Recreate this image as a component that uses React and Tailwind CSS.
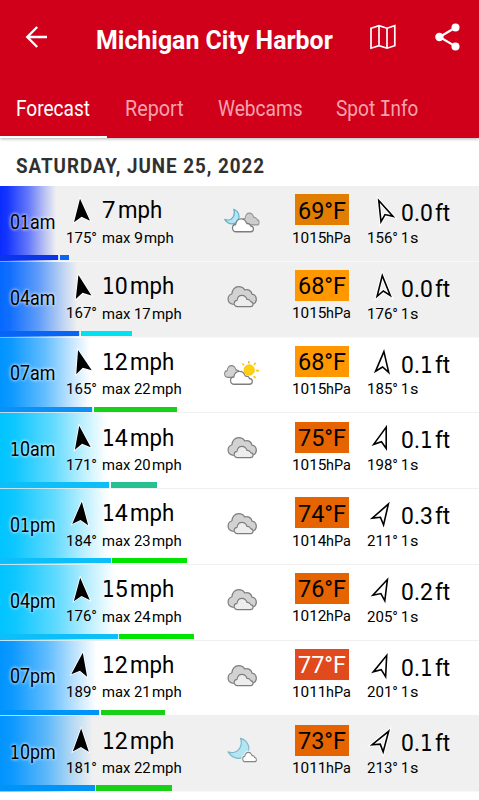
import { useLayoutEffect, useRef, useState } from 'react';

const WIND = 'M12 0.6 L20 23.6 L12 18.9 L4 23.6 Z';
const WAVE = 'M12 1.6 L18.6 21.9 L12 17 L5.4 21.9 Z';

// Sets a line of text to an exact advance width by scaling it horizontally.
function Fit({ w, className = '', children }) {
  const ref = useRef(null);
  const [scale, setScale] = useState(1);
  useLayoutEffect(() => {
    const apply = () => setScale(w / ref.current.offsetWidth);
    apply();
    document.fonts?.ready.then(apply);
  }, [w, children]);
  return (
    <div className={`whitespace-nowrap leading-none ${className}`} style={{ width: w }}>
      <span ref={ref} className="inline-block origin-left align-top" style={{ transform: `scaleX(${scale})` }}>
        {children}
      </span>
    </div>
  );
}

// Gives the figure one its foot serif.
function Slab({ text }) {
  return text.split(/(1)/).map((part, i) =>
    part === '1' ? (
      <span key={i} className="font-['DejaVu_Sans_Condensed','DejaVu_Sans',sans-serif] text-[0.97em] leading-[0]">1</span>
    ) : (
      part
    ),
  );
}

function WindArrow({ deg }) {
  return (
    <svg className="block h-6 w-6 overflow-visible" viewBox="0 0 24 24" style={{ transform: `rotate(${deg - 180}deg)` }}>
      <path d={WIND} fill="#000" stroke="#fff" strokeWidth="1.6" paintOrder="stroke" />
    </svg>
  );
}

function WaveArrow({ deg }) {
  return (
    <svg className="block h-6 w-6 overflow-visible" viewBox="0 0 24 24" style={{ transform: `rotate(${deg - 180}deg)` }}>
      <path d={WAVE} fill="none" stroke="#fff" strokeWidth="3.6" />
      <path d={WAVE} fill="none" stroke="#000" strokeWidth="1.6" strokeLinejoin="miter" />
    </svg>
  );
}

const SMALL_CLOUD = 'M4.5 12 C2.2 12 .8 10.7 .8 8.8 C.8 7 2.2 5.7 4 5.7 C4.6 2.6 6.8 .8 9.6 .8 C12.4 .8 14.4 2.3 15.3 4.9 C17.6 4.7 19 5.6 19.5 7 C21.1 7.2 22.2 8.2 22.2 9.6 C22.2 11.1 21 12 19.3 12 Z';

function Weather({ kind }) {
  return (
    <svg className="block h-10 w-[50px]" viewBox="0 0 50 40" strokeWidth="1.2" strokeLinejoin="round">
      {kind === 'cloudy' && (
        <>
          <path d="M14.5 28.2 C11.6 27.6 10.1 25.6 10.1 23.1 C10.1 20.3 11.5 18.6 13.8 18 C14 14.2 16.6 10.6 20.8 10.6 C23.5 10.6 25.7 12 26.7 14 C30.2 12.8 33.5 14.8 34 18.2 C36.8 18.6 38.3 20.8 38.3 23.2 C38.3 25.8 36.6 27.7 34 28.4 Z" fill="#d2d2d2" stroke="#7d7d7d" />
          <path transform="translate(15.5 18.6) scale(.88 1)" d={SMALL_CLOUD} fill="#ededed" stroke="#7d7d7d" />
        </>
      )}
      {kind === 'moonCloud' && (
        <>
          <path d="M15.8 9.2 C20.5 11.2 22.4 16 20.2 20 C17.6 25 10.6 25.6 6.7 19.4 C11 20.8 14 19.2 15.3 16.8 C16.5 14.6 16.8 12.2 15.8 9.2 Z" fill="#b4e5f3" stroke="#66b2cb" />
          <path transform="translate(24 12.3) scale(.77 1.05)" d={SMALL_CLOUD} fill="#cccccc" stroke="#949494" />
          <path d={SMALL_CLOUD} transform="translate(13.7 17.9) scale(.98 1.16)" fill="#fff" stroke="#7d7d7d" />
        </>
      )}
      {kind === 'sunCloud' && (
        <>
          <g stroke="#f8c408" strokeWidth="1.6">
            <circle cx="31.2" cy="18" r="5.2" fill="#ffcf10" stroke="#f2bb00" strokeWidth=".7" />
            <path d="M30.8 9v2.4M24.5 11.5l1.5 1.8M37.6 10.8l-1.8 1.9M38.1 18.6h2.9M35.7 24.2l1.9 1.8" />
          </g>
          <path transform="translate(6 12.7) scale(.78 1.05)" d={SMALL_CLOUD} fill="#d2d2d2" stroke="#858585" />
          <path d={SMALL_CLOUD} transform="translate(11.7 18.5) scale(1.02 1.15)" fill="#fff" stroke="#7d7d7d" />
        </>
      )}
      {kind === 'moon' && (
        <>
          <path d="M22.4 8.3 C29 9.8 32.5 16.5 30 22.3 C26.8 29.6 15.8 31.2 10 21.9 C15 23.6 20 21.8 22 17.8 C23.6 14.8 23.8 11.6 22.4 8.3 Z" fill="#b4e5f3" stroke="#7fb9c9" />
          <path d={SMALL_CLOUD} transform="translate(24.2 21.6) scale(.64 .84)" fill="#fff" stroke="#f0f0f0" strokeWidth="4.5" />
          <path d={SMALL_CLOUD} transform="translate(24.2 21.6) scale(.64 .84)" fill="#fff" stroke="#858585" strokeWidth="1.5" />
        </>
      )}
    </svg>
  );
}

const BLUE = '#0094ff';
const CYAN = '#00c4ff';
const ROWS = [
  { t: '01am', s: '7', m: '9', d: 175, icon: 'moonCloud', f: 69, fc: '#e17d00', p: 1015, wd: 156, h: '0.0', c: '#0a2cff', c1: '#0a35e8', c2: '#0b66f2', b: [59.3, 60, 69], night: true },
  { t: '04am', s: '10', m: '17', d: 167, icon: 'cloudy', f: 68, fc: '#ff9800', p: 1015, wd: 176, h: '0.0', c: '#0568ff', c1: '#0764f5', c2: '#00e1f2', b: [80.3, 81, 132], night: true },
  { t: '07am', s: '12', m: '22', d: 165, icon: 'sunCloud', f: 68, fc: '#ff9800', p: 1015, wd: 185, h: '0.1', c: BLUE, c1: '#0a91f8', c2: '#19d019', b: [93, 94, 176.5] },
  { t: '10am', s: '14', m: '20', d: 171, icon: 'cloudy', f: 75, fc: '#e66400', p: 1015, wd: 198, h: '0.1', c: CYAN, c1: '#0cbff8', c2: '#27c093', b: [110, 110.6, 157] },
  { t: '01pm', s: '14', m: '23', d: 184, icon: 'cloudy', f: 74, fc: '#e66400', p: 1014, wd: 211, h: '0.3', c: CYAN, c1: '#0cbff8', c2: '#00e500', b: [112, 112.3, 187] },
  { t: '04pm', s: '15', m: '24', d: 176, icon: 'cloudy', f: 76, fc: '#e66400', p: 1012, wd: 205, h: '0.2', c: CYAN, c1: '#0cbff8', c2: '#00e500', b: [118.5, 119, 193.5] },
  { t: '07pm', s: '12', m: '21', d: 189, icon: 'cloudy', f: 77, fc: '#e04a1c', p: 1011, wd: 201, h: '0.1', c: BLUE, c1: '#0094f8', c2: '#19d019', b: [100, 101, 165] },
  { t: '10pm', s: '12', m: '22', d: 181, icon: 'moon', f: 73, fc: '#e66400', p: 1011, wd: 213, h: '0.1', c: BLUE, c1: '#0094f8', c2: '#19d019', b: [96, 96.3, 172.5], night: true },
];

function Row({ r }) {
  const [a, b, c] = r.b;
  const fade = a - 3;
  return (
    <div
      className={`flex h-[75.75px] flex-col ${r.night ? 'bg-[#f0f0f0]' : 'bg-white'}`}
      style={{
        backgroundImage: `linear-gradient(to right, ${r.c} 0px, ${r.c}f2 ${fade * 0.13}px, ${r.c}9c ${fade * 0.5}px, ${r.c}40 ${fade * 0.78}px, ${r.c}00 ${fade}px)`,
      }}
    >
      <div className="flex h-[69px]">
        <div className="w-[66px] pl-[10.3px] pt-[25.6px]">
          <Fit w={45.5} className="text-[20px] [text-shadow:0_0_4px_rgba(255,255,255,0.9),0_0_3px_rgba(255,255,255,0.5)]"><Slab text={r.t} /></Fit>
        </div>
        <div className="w-9 pt-[11.8px]">
          <div className="pl-[2.6px]"><WindArrow deg={r.d} /></div>
          <Fit w={30.5} className="mt-[8.6px] text-[14.3px]">{r.d}°</Fit>
        </div>
        <div className="w-[116px] pt-[12.3px]">
          <div className="flex text-[24px]">
            <Fit w={r.s.length === 1 ? 14 : 26}><Slab text={r.s} /></Fit>
            <Fit w={44.5} className="ml-[2px]">mph</Fit>
          </div>
          <div className="mt-[8.4px] flex text-[14.3px]">
            <Fit w={28}>max</Fit>
            <Fit w={r.m.length === 1 ? 9 : 16.6} className="ml-1">{r.m}</Fit>
            <Fit w={29.3} className="ml-[1.4px]">mph</Fit>
          </div>
        </div>
        <div className="w-[77.3px] pt-[14px]"><Weather kind={r.icon} /></div>
        <div className="w-[72.2px] pt-[8.3px]">
          <div
            className={`flex h-[31px] w-[53.4px] justify-center pt-[4.2px] text-[24px] ${r.f === 77 ? 'text-white' : ''}`}
            style={{ backgroundColor: r.fc }}
          >
            <Fit w={47.8}>{r.f}°F</Fit>
          </div>
          <div className="-ml-[3.3px] mt-[5.2px] flex text-[14.3px]">
            <Fit w={34.3}>{r.p}</Fit>
            <Fit w={25.2}>hPa</Fit>
          </div>
        </div>
        <div className="w-[33.5px] pt-[12px]">
          <div className="pl-[3.8px]"><WaveArrow deg={r.wd} /></div>
          <Fit w={30.5} className="mt-[8.6px] text-[14.3px]">{r.wd}°</Fit>
        </div>
        <div className="pt-[15px]">
          <div className="flex text-[24px]">
            <Fit w={31.5}><Slab text={r.h} /></Fit>
            <Fit w={15} className="ml-[2.5px]">ft</Fit>
          </div>
          <div className="mt-[5.6px] flex text-[14.3px]">
            <Fit w={8}>1</Fit>
            <Fit w={8} className="ml-px">s</Fit>
          </div>
        </div>
      </div>
      <div className="flex h-[5.3px]">
        <div className="border-r border-white/80" style={{ width: a, background: r.c1 }} />
        <div style={{ width: c - b, marginLeft: b - a, background: r.c2 }} />
      </div>
      <div className={`mt-auto h-px ${r.night ? 'bg-white/50' : 'bg-[#ececec]/80'}`} />
    </div>
  );
}

export default function App() {
  return (
    <div className="h-[800px] w-[479px] overflow-hidden bg-white font-[Roboto,sans-serif] text-black">
      <header className="flex h-[138px] flex-col bg-[#d0001b] text-white shadow-[0_1px_3px_rgba(0,0,0,0.3)]">
        <div className="flex h-[74px] items-center">
          <svg className="ml-[25px] block h-6 w-[23px]" viewBox="0 0 23 24" fill="none" stroke="#fff" strokeWidth="2.4">
            <path d="M22 12H2.5M12.2 2L2.3 12l9.9 10" />
          </svg>
          <Fit w={236.5} className="ml-12 mt-[5px] text-[26px] font-bold">Michigan City Harbor</Fit>
          <svg className="ml-[37.5px] block h-[26px] w-[26px]" viewBox="0 0 26 26" fill="none" stroke="#fff" strokeWidth="1.7">
            <path d="M1 4.2 L9 1.7 L17 4.2 L24.8 1.7 V21.7 L17 24.2 L9 21.7 L1 24.2 Z M9 1.7V21.7M17 4.2V24.2" />
          </svg>
          <svg className="ml-[38.5px] block h-7 w-[26px]" viewBox="0 0 26 28" fill="#fff">
            <path d="M20.5 4.5L4.6 14l15.9 9.4" fill="none" stroke="#fff" strokeWidth="2.2" />
            <circle cx="20.5" cy="4.6" r="4" /><circle cx="4.4" cy="14" r="4.2" /><circle cx="20.5" cy="23.4" r="4" />
          </svg>
        </div>
        <nav className="flex h-[61.5px] pl-4 pt-[24px] text-[21.3px] text-[#f4a3ad]">
          <Fit w={74.3} className="text-white">Forecast</Fit>
          <Fit w={58.5} className="ml-[34.7px]">Report</Fit>
          <Fit w={84.5} className="ml-[35px]">Webcams</Fit>
          <div className="ml-[33px] flex">
            <Fit w={39.5}>Spot</Fit>
            <Fit w={38} className="ml-[4.5px]">
              <span className="-mx-[0.04em] font-['Liberation_Mono',monospace] text-[1.08em] leading-[0]">I</span>nfo
            </Fit>
          </div>
        </nav>
        <div className="h-[2.5px] w-[107px] bg-white" />
      </header>
      <div className="h-[48.2px] pl-[16.4px] pt-[18.8px]">
        <Fit w={248.6} className="text-[19.5px] font-bold tracking-[1px] text-[#303030]">SATURDAY, JUNE 25, 2022</Fit>
      </div>
      <main>
        {ROWS.map((r) => <Row key={r.t} r={r} />)}
      </main>
    </div>
  );
}
